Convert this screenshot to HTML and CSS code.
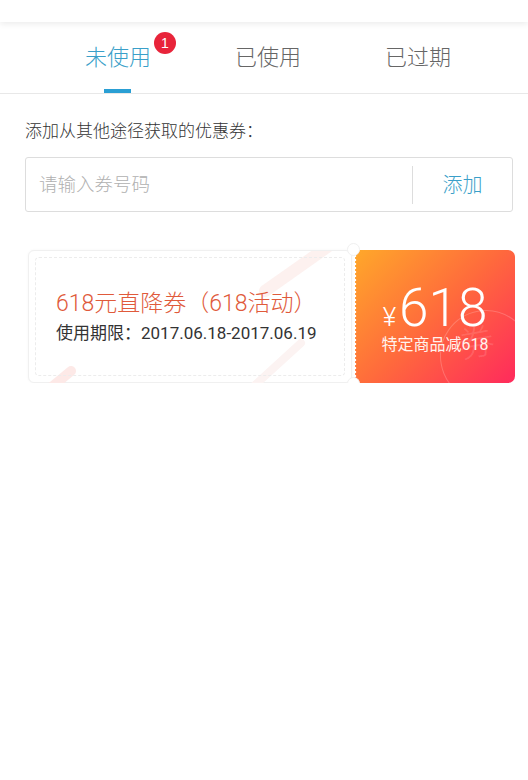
FILE: index.html
```html
<!DOCTYPE html>
<html lang="zh-CN">
<head>
  <meta charset="UTF-8" />
  <meta name="viewport" content="width=device-width, initial-scale=1.0"/>
  <title>我的优惠券</title>
  <link rel="stylesheet" href="styles.css">
</head>
<body>
  <div class="top-bar"></div>

  <div class="tabs">
    <div class="tab active">
      <span class="tab-label">未使用<span class="badge">1</span></span>
    </div>
    <div class="tab"><span class="tab-label">已使用</span></div>
    <div class="tab"><span class="tab-label">已过期</span></div>
  </div>

  <div class="add-block">
    <p class="add-title">添加从其他途径获取的优惠券：</p>
    <div class="add-box">
      <input type="text" class="add-input" placeholder="请输入券号码">
      <button type="button" class="add-button">添加</button>
    </div>
  </div>

  <div class="coupon">
    <div class="coupon-info">
      <svg class="coupon-deco" width="324" height="133" viewBox="0 0 324 133">
        <path d="M236 40 L304 -8" stroke="#fdf1ef" stroke-width="12" stroke-linecap="round"></path>
        <path d="M226 134 L272 92" stroke="#fcf3f2" stroke-width="8" stroke-linecap="round"></path>
        <path d="M18 140 L42 120" stroke="#fde9e7" stroke-width="10" stroke-linecap="round"></path>
      </svg>
      <div class="coupon-inner">
        <h3 class="coupon-name">618元直降券（618活动）</h3>
        <p class="coupon-date">使用期限：2017.06.18-2017.06.19</p>
      </div>
    </div>
    <div class="coupon-value">
      <div class="price"><span class="yen">¥</span>618</div>
      <div class="price-note">特定商品减618</div>
      <span class="stamp">券</span>
    </div>
    <span class="notch notch-top"></span>
    <span class="notch notch-bottom"></span>
  </div>
</body>
</html>
```

FILE: styles.css
```css
body {
  margin: 0;
  background: #ffffff;
  font-family: Roboto, "Noto Sans CJK SC", sans-serif;
  font-weight: 300;
  color: #333333;
}

.top-bar {
  height: 22px;
  background: #ffffff;
  box-shadow: 0 2px 6px rgba(0, 0, 0, 0.08);
  position: relative;
}

.tabs {
  display: flex;
  height: 71px;
  padding-left: 43px;
  border-bottom: 1px solid #e8e8e8;
}

.tab {
  width: 150px;
  display: flex;
  align-items: center;
  justify-content: center;
  position: relative;
  font-size: 22px;
  line-height: 30px;
  color: #666666;
}

.tab-label {
  position: relative;
}

.tab.active {
  color: #3a9fc9;
}

.tab.active::after {
  content: "";
  position: absolute;
  left: 61px;
  bottom: 0;
  width: 27px;
  height: 4px;
  background: #2a9fd4;
}

.badge {
  position: absolute;
  top: -11px;
  right: -25px;
  width: 22px;
  height: 22px;
  border-radius: 50%;
  background: #e8243a;
  color: #ffffff;
  font-family: "Liberation Sans", sans-serif;
  font-weight: 400;
  font-size: 14px;
  line-height: 22px;
  text-align: center;
}

.add-block {
  padding: 25px 15px 0 25px;
}

.add-title {
  margin: 0 0 14px 0;
  font-size: 17px;
  line-height: 24px;
  color: #333333;
}

.add-box {
  display: flex;
  align-items: center;
  height: 53px;
  border: 1px solid #dddddd;
  border-radius: 3px;
}

.add-input {
  flex: 1;
  min-width: 0;
  height: 100%;
  border: none;
  outline: none;
  padding: 0 0 0 13px;
  background: transparent;
  font-family: inherit;
  font-weight: 300;
  font-size: 18.5px;
  color: #333333;
}

.add-input::placeholder {
  color: #b0b0b0;
}

.add-button {
  width: 100px;
  height: 38px;
  border: none;
  border-left: 1px solid #dddddd;
  background: transparent;
  font-family: inherit;
  font-weight: 300;
  font-size: 20px;
  color: #3a9fc9;
  padding: 0 0 3px 0;
}

.coupon {
  position: relative;
  display: flex;
  margin: 38px 13px 0 28px;
  height: 133px;
}

.coupon-info {
  position: relative;
  width: 324px;
  box-sizing: border-box;
  border: 1px solid #f0f0f0;
  border-radius: 6px;
  background: #ffffff;
  box-shadow: 0 0 3px rgba(0, 0, 0, 0.04);
  padding: 6px;
}

.coupon-deco {
  position: absolute;
  left: 0;
  top: 0;
}

.coupon-inner {
  position: relative;
  height: 100%;
  box-sizing: border-box;
  border: 1px dashed #ececec;
  border-radius: 4px;
  padding: 30px 0 0 20px;
}

.coupon-name {
  margin: 0;
  font-size: 23px;
  font-weight: 300;
  line-height: 32px;
  color: #e05a3b;
}

.coupon-date {
  margin: 0;
  font-size: 17px;
  font-weight: 400;
  line-height: 26px;
  color: #333333;
}

.notch {
  position: absolute;
  left: 319px;
  width: 11px;
  height: 11px;
  border-radius: 50%;
  background: #ffffff;
  border: 1px solid #f0f0f0;
  z-index: 2;
}

.notch-top {
  top: -7px;
}

.notch-bottom {
  bottom: -7px;
}

.coupon-value {
  position: relative;
  overflow: hidden;
  width: 160px;
  margin-left: 3px;
  border-radius: 3px 7px 7px 3px;
  background: linear-gradient(135deg, #ffa82a 0%, #ff6a3c 50%, #ff2a5c 100%);
  color: #ffffff;
  text-align: center;
}

.coupon-value::before {
  content: "";
  position: absolute;
  left: -2px;
  top: 0;
  bottom: 0;
  width: 4px;
  background: radial-gradient(circle, #ffffff 1.4px, transparent 1.6px) 0 0 / 4px 4px repeat-y;
}

.price {
  position: relative;
  z-index: 1;
  margin-top: 35px;
  font-weight: 300;
  font-size: 53px;
  line-height: 46px;
}

.yen {
  font-size: 26px;
  line-height: 1;
  margin-right: 3px;
}

.price-note {
  position: relative;
  z-index: 1;
  margin-top: 3px;
  font-size: 16px;
  line-height: 22px;
  font-weight: 400;
  color: #fff3ee;
}

.stamp {
  position: absolute;
  right: -17px;
  bottom: -19px;
  width: 90px;
  height: 90px;
  border: 1px solid rgba(255, 255, 255, 0.2);
  border-radius: 50%;
  font-size: 36px;
  line-height: 62px;
  color: rgba(255, 255, 255, 0.14);
  text-align: left;
  text-indent: 20px;
  transform: rotate(-10deg);
}
```
